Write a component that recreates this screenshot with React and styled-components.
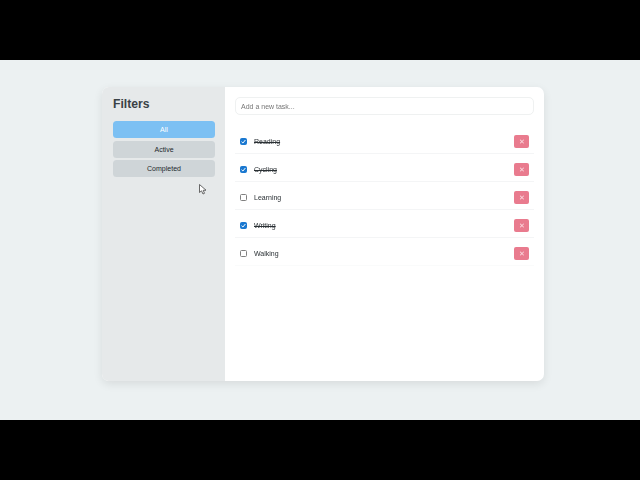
import React from "react";
import styled, { createGlobalStyle } from "styled-components";

const Global = createGlobalStyle`
  html, body { margin: 0; padding: 0; background: #000; }
  body { width: 640px; height: 480px; overflow: hidden; font-family: "Liberation Sans", Arial, sans-serif; }
`;
const Frame = styled.div`
  width: 640px; height: 480px; background: #000;
  display: flex; flex-direction: column; justify-content: center;
`;
const Stage = styled.main`
  position: relative;
  height: 360px; background: #ecf1f2;
  display: flex; flex-direction: column; align-items: flex-start;
  padding: 27px 0 0 102px; box-sizing: border-box;
`;
const Card = styled.div`
  width: 442px; height: 294px; display: flex; border-radius: 7px; overflow: hidden;
  box-shadow: 0 3px 10px rgba(0,0,0,0.09); background: #fff; filter: blur(0.5px);
`;
const Sidebar = styled.aside`
  width: 123px; box-sizing: border-box; background: #e6e9ea; padding: 10px 10px 0 11px;
  display: flex; flex-direction: column;
`;
const Title = styled.h2`
  margin: 0 0 10px; font-size: 12.2px; line-height: 14px; font-weight: 700; color: #3a4246;
`;
const FilterButton = styled.button`
  height: 17px; margin-bottom: 2.5px; padding: 0; border: 0; border-radius: 3.5px;
  font: 7px "Liberation Sans", Arial, sans-serif;
  background: ${p => (p.$active ? "#7cc0f3" : "#cfd5d8")};
  color: ${p => (p.$active ? "#fff" : "#22282c")};
`;
const Content = styled.section`
  flex: 1; padding: 10px 10px 0; display: flex; flex-direction: column;
`;
const TaskInput = styled.input`
  height: 18px; box-sizing: border-box; width: 100%; border: 1px solid #eff1f1; border-radius: 5px;
  padding: 0 5px; margin-bottom: 11px; outline: none; background: #fff;
  font: 7px "Liberation Sans", Arial, sans-serif;
  &::placeholder { color: #777; opacity: 1; }
`;
const List = styled.ul`
  margin: 0; padding: 0; list-style: none;
`;
const Row = styled.li`
  height: 28px; box-sizing: border-box; display: flex; align-items: center; padding: 4px 5px 0;
  border-bottom: 1px solid ${p => (p.$last ? "#fafbfb" : "#f4f5f6")};
`;
const Check = styled.span`
  width: 7px; height: 7px; box-sizing: border-box; border-radius: 1.5px; margin-right: 7px; flex: none;
  display: flex; align-items: center; justify-content: center;
  border: 1px solid ${p => (p.$on ? "#1a78d0" : "#808080")};
  background: ${p => (p.$on ? "#1a78d0" : "#fff")};
`;
const Label = styled.span`
  flex: 1; font-size: 7px; color: #2a3034;
  text-decoration: ${p => (p.$done ? "line-through" : "none")};
`;
const Delete = styled.button`
  width: 15px; height: 13px; padding: 0; border: 0; border-radius: 2px; background: #e97b8e;
  color: #fcdde2; font: 7px "Liberation Sans", Arial, sans-serif; display: flex; align-items: center; justify-content: center;
`;
const Cursor = styled.svg`
  position: absolute; left: 199px; top: 124px; width: 8px; height: 11px;
`;

const tasks = [
  ["Reading", true], ["Cycling", true], ["Learning", false], ["Writing", true], ["Walking", false],
];

export default function App() {
  return (
    <Frame>
      <Global />
      <Stage>
        <Card>
          <Sidebar>
            <Title>Filters</Title>
            <FilterButton $active>All</FilterButton>
            <FilterButton>Active</FilterButton>
            <FilterButton>Completed</FilterButton>
          </Sidebar>
          <Content>
            <TaskInput placeholder="Add a new task..." />
            <List>
              {tasks.map(([name, done], i) => (
                <Row key={name} $last={i === tasks.length - 1}>
                  <Check $on={done}>
                    {done && (
                      <svg width="5" height="5" viewBox="0 0 5 5">
                        <path d="M0.5 2.7 L1.9 4 L4.4 1" fill="none" stroke="#fff" strokeWidth="1" />
                      </svg>
                    )}
                  </Check>
                  <Label $done={done}>{name}</Label>
                  <Delete>✕</Delete>
                </Row>
              ))}
            </List>
          </Content>
        </Card>
        <Cursor viewBox="0 0 8 11">
          <path d="M0.5 0.5 L0.5 8.5 L2.5 6.8 L4 10 L5.5 9.3 L4.2 6.3 L7 6.2 Z" fill="#fff" stroke="#444" strokeWidth="0.8" />
        </Cursor>
      </Stage>
    </Frame>
  );
}
